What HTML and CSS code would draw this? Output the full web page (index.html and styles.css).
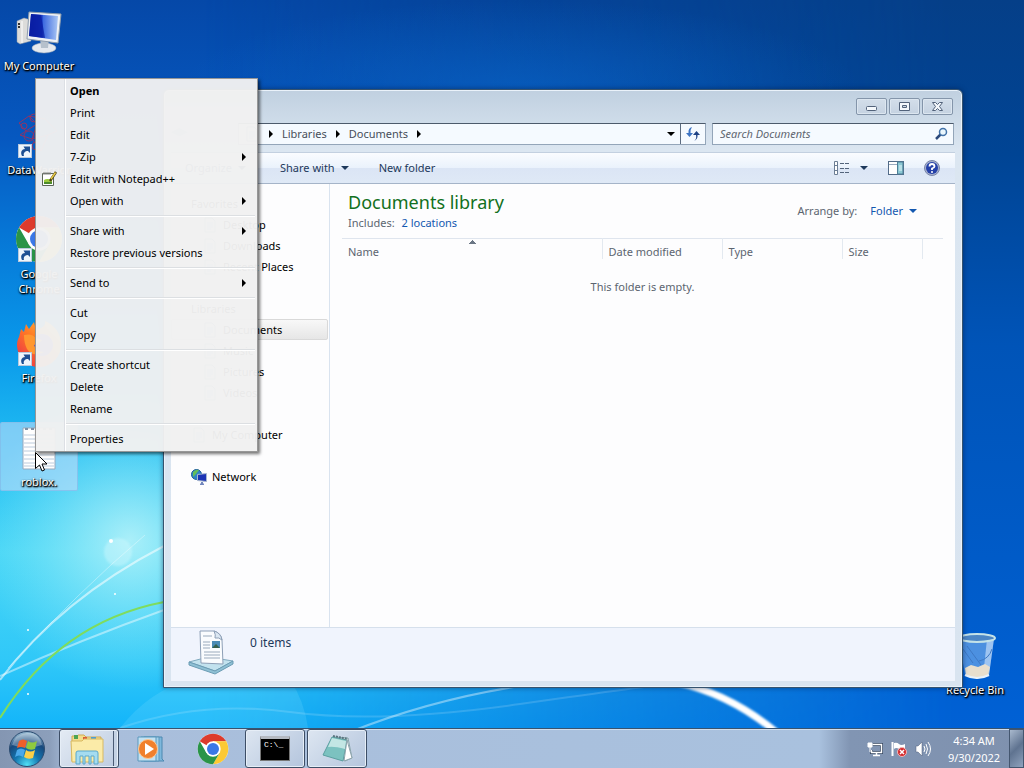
FILE: index.html
```html
<!DOCTYPE html>
<html lang="en">
<head>
    <meta charset="UTF-8">
    <meta name="viewport" content="width=device-width, initial-scale=1.0">
    <title>Desktop</title>
    <link rel="stylesheet" href="styles.css">
</head>
<body>
    <!-- shared symbols -->
    <svg class="defs" width="0" height="0" aria-hidden="true">
        <symbol id="shortcut" viewBox="0 0 14 14">
            <rect x=".5" y=".5" width="13" height="13" fill="#eef5fc" stroke="#b9c9dc"/>
            <path d="M4 12C2 8 4 5 7 5L5.500 2.500H12V9L10 7C7 7 5 9 6 12Z" fill="#1d4f93"/>
        </symbol>
        <symbol id="chrome" viewBox="0 0 48 48">
            <circle cx="24" cy="24" r="23" fill="#fff"/>
            <path d="M24 24L4.100 12.500A23 23 0 0 1 43.900 12.500H24Z" fill="#dd3b2c"/>
            <path d="M43.900 12.500A23 23 0 0 1 24 47L34 29.800 34 17.500 24 12.500Z" fill="#fcc934"/>
            <path d="M24 47A23 23 0 0 1 4.100 12.500L14 29.800 24 35 34 29.800Z" fill="#2a9448"/>
            <circle cx="24" cy="24" r="11.500" fill="#fff"/>
            <circle cx="24" cy="24" r="9" fill="#3b78e7"/>
        </symbol>
        <symbol id="page" viewBox="0 0 16 16">
            <path d="M3 1H10L13 4V15H3Z" fill="#fff" stroke="#7c93ad"/>
            <path d="M5 6H11M5 8H11M5 10H11M5 12H9" stroke="#7ba5cf"/>
        </symbol>
    </svg>

    <div class="desktop">
        <svg class="wallpaper" viewBox="0 0 1024 768" preserveAspectRatio="none" aria-hidden="true">
            <defs>
                <linearGradient id="sky" x1="0" y1="0" x2="0" y2="1">
                    <stop offset="0" stop-color="#0548a8"/>
                    <stop offset=".18" stop-color="#0658c0"/>
                    <stop offset=".3" stop-color="#0675d5"/>
                    <stop offset=".45" stop-color="#0998ea"/>
                    <stop offset=".58" stop-color="#20bcf2"/>
                    <stop offset=".72" stop-color="#48d6f6"/>
                    <stop offset=".86" stop-color="#30c8f8"/>
                    <stop offset=".95" stop-color="#12b4fa"/>
                    <stop offset="1" stop-color="#12b4fa"/>
                </linearGradient>
                <linearGradient id="right-sky" x1="0" y1="0" x2="0" y2="1">
                    <stop offset="0" stop-color="#053f88"/>
                    <stop offset=".2" stop-color="#004494"/>
                    <stop offset=".45" stop-color="#0054b8"/>
                    <stop offset="1" stop-color="#0062d8"/>
                </linearGradient>
                <linearGradient id="fade" x1="0" y1="0" x2="1" y2="0">
                    <stop offset=".2" stop-color="#fff" stop-opacity="0"/>
                    <stop offset=".55" stop-color="#fff" stop-opacity=".5"/>
                    <stop offset=".93" stop-color="#fff"/>
                </linearGradient>
                <mask id="right-mask"><rect width="1024" height="768" fill="url(#fade)"/></mask>
                <radialGradient id="top-glow">
                    <stop offset="0" stop-color="#0b6ad0"/>
                    <stop offset="1" stop-color="#0b6ad0" stop-opacity="0"/>
                </radialGradient>
                <radialGradient id="glow">
                    <stop offset="0" stop-color="#c4f6fa" stop-opacity=".8"/>
                    <stop offset="1" stop-color="#8aecf8" stop-opacity="0"/>
                </radialGradient>
                <filter id="soft"><feGaussianBlur stdDeviation="1"/></filter>
            </defs>
            <rect width="1024" height="768" fill="url(#sky)"/>
            <rect width="1024" height="768" fill="url(#right-sky)" mask="url(#right-mask)"/>
            <ellipse cx="520" cy="90" rx="340" ry="90" fill="url(#top-glow)" opacity=".5"/>
            <ellipse cx="130" cy="540" rx="150" ry="150" fill="url(#glow)"/>
            <circle cx="118" cy="552" r="14" fill="#dffcff" opacity=".35" filter="url(#soft)"/>
            <path d="M120 728Q150 690 190 680H290Q304 700 308 728Z" fill="#8ce6ff" opacity=".18"/>
            <g fill="none" stroke="#fff">
                <path d="M0 680Q60 600 164 546" stroke-width="2" opacity=".55"/>
                <path d="M8 668Q80 590 145 535" opacity=".35"/>
                <path d="M0 676Q80 640 164 610" stroke-width="2" opacity=".45"/>
                <path d="M120 728Q200 700 290 712T520 704T660 686" stroke-width="2" opacity=".15"/>
                <path d="M350 732Q430 700 520 686" stroke-width="2" opacity=".4"/>
                <path d="M676 682Q730 694 776 732" stroke-width="7" filter="url(#soft)"/>
            </g>
            <path d="M0 718Q60 622 164 602" fill="none" stroke="#7fdc5c" stroke-width="2"/>
            <g fill="#fff"><circle cx="111" cy="541" r="2"/><circle cx="115" cy="594" r="1"/><circle cx="28" cy="694" r="1"/><circle cx="28" cy="630" r="1"/></g>
        </svg>

        <div class="icons">
            <a href="#" class="icon">
                <svg width="48" height="48" viewBox="0 0 48 48">
                    <defs><linearGradient id="screen"><stop offset="0" stop-color="#0b23a8"/><stop offset=".45" stop-color="#1a3ec8"/><stop offset=".5" stop-color="#3f6be0"/><stop offset="1" stop-color="#a9c6f4"/></linearGradient></defs>
                    <path d="M2 14L9 11 16 13V34L5 37 2 35Z" fill="#dcdcda" stroke="#8f9aa8" stroke-width=".5"/>
                    <path d="M3 17H5M3 20H5" stroke="#333" stroke-width="2"/>
                    <path d="M7 14V36" stroke="#fff"/>
                    <ellipse cx="29" cy="41" rx="12" ry="5" fill="#e5e9ee" stroke="#9aa5b2" stroke-width=".5"/>
                    <path d="M25 31H34L33 41H26Z" fill="#b6c1cc"/>
                    <path d="M14 5L46 7 43 36 12 32Z" fill="#eef1f5" stroke="#8e9dad"/>
                    <path d="M16 7L43 9 41 33 14 29Z" fill="url(#screen)"/>
                    <path d="M16 7L26 8 30 31 14 29Z" fill="#0719a0" opacity=".7"/>
                </svg>
                <span>My Computer</span>
            </a>
            <a href="#" class="icon">
                <svg width="48" height="48" viewBox="0 0 48 48">
                    <g fill="none" stroke="#8e3566">
                        <path d="M4 12L14 5 22 13 11 20ZM14 5L30 8M22 13L17 28 5 24 11 20M17 28L26 40 33 24ZM30 8L42 20 33 24"/>
                        <circle cx="9" cy="15" r="3"/><circle cx="19" cy="7" r="4"/><circle cx="14" cy="25" r="5"/><circle cx="21" cy="35" r="4"/>
                    </g>
                    <use href="#shortcut" x="3" y="33" width="14" height="14"/>
                </svg>
                <span>DataWarrior</span>
            </a>
            <a href="#" class="icon">
                <svg width="48" height="48" viewBox="0 0 48 48">
                    <use href="#chrome" width="48" height="48"/>
                    <use href="#shortcut" x="3" y="33" width="14" height="14"/>
                </svg>
                <span>Google<br>Chrome</span>
            </a>
            <a href="#" class="icon">
                <svg width="48" height="48" viewBox="0 0 48 48">
                    <defs><linearGradient id="fox" x1="1" y1="0" x2="0" y2="1"><stop offset="0" stop-color="#ffd54a"/><stop offset=".5" stop-color="#ff7a25"/><stop offset="1" stop-color="#e8264f"/></linearGradient></defs>
                    <path d="M4 18L6 10 9 13 11 5 14 10 19 3 21 11C27 9 31 7 30 2 40 6 46 15 46 25A22 22 0 0 1 2 27C2 22 3 20 4 18Z" fill="url(#fox)"/>
                    <circle cx="27" cy="26" r="11" fill="#6848c4"/>
                    <path d="M9 16Q17 14 21 19L27 21Q24 25 19 26 21 33 29 33 18 39 12 30 9 24 9 16Z" fill="#ff9730"/>
                    <use href="#shortcut" x="3" y="33" width="14" height="14"/>
                </svg>
                <span>Firefox</span>
            </a>
            <a href="#" class="icon selected">
                <svg width="48" height="48" viewBox="0 0 48 48">
                    <path d="M8 5H40V46H8Z" fill="#fff" stroke="#98a9bd"/>
                    <path d="M9 12H39M9 16H39M9 20H39M9 24H39M9 28H39M9 32H39M9 36H39M9 40H39M9 43H39" stroke="#bccbdc"/>
                    <path d="M10 6H40" stroke="#7d90a6" stroke-width="2" stroke-dasharray="3 3"/>
                </svg>
                <span>roblox.</span>
            </a>
        </div>

        <a href="#" class="icon bin">
            <svg width="48" height="48" viewBox="0 0 48 48">
                <path d="M8 7H43L38 44Q26 50 14 44Z" fill="#8ab9ee" fill-opacity=".55"/>
                <path d="M36 8H43L38 44 32 46Z" fill="#d5e7fb" opacity=".6"/>
                <path d="M14 37L20 34 27 36 34 33 39 36 37 44Q26 49 15 44Z" fill="#e9dfcd"/>
                <path d="M12 18L22 32M28 30Q38 28 41 18M16 15L30 34" fill="none" stroke="#3e79c5"/>
                <path d="M14 44Q26 50 38 44" fill="none" stroke="#e9f2fb" stroke-width="2"/>
                <ellipse cx="26" cy="7" rx="18" ry="4" fill="#4c86c5" stroke="#c4e2e8" stroke-width="2"/>
            </svg>
            <span>Recycle Bin</span>
        </a>

        <main class="window">
            <header class="titlebar">
                <button aria-label="Minimize"><svg width="13" height="11"><rect x="1.500" y="5.500" width="10" height="4" rx="1" fill="#f4f8fc" stroke="#52627a"/></svg></button>
                <button aria-label="Maximize"><svg width="13" height="11"><path d="M1.500 1.500H11.500V9.500H1.500ZM4.500 4.500V6.500H8.500V4.500Z" fill="#f4f8fc" fill-rule="evenodd" stroke="#52627a"/></svg></button>
                <button aria-label="Close"><svg width="13" height="11"><path d="M1.500 1.500H4.500L6.500 3.500 8.500 1.500H11.500L8.500 5.500 11.500 9.500H8.500L6.500 7.500 4.500 9.500H1.500L4.500 5.500Z" fill="#f4f8fc" stroke="#52627a"/></svg></button>
            </header>

            <div class="navbar">
                <div class="history"><button aria-label="Back">&#9664;</button><button aria-label="Forward">&#9654;</button></div>
                <nav class="address" aria-label="Address">
                    <svg width="16" height="16"><use href="#page"/></svg>
                    <i class="arrow right"></i>
                    <a href="#">Libraries</a>
                    <i class="arrow right"></i>
                    <a href="#">Documents</a>
                    <i class="arrow right"></i>
                    <button class="drop" aria-label="Previous locations"><i class="arrow down"></i></button>
                    <button class="refresh" aria-label="Refresh">
                        <svg width="16" height="16" viewBox="0 0 16 16"><path d="M7 1Q3 2 3.500 7H1L4.500 11 8 7H5.500Q5 4 7 1Z" fill="#3d74c3"/><path d="M9 15Q12 13 11 9H8L11.500 5 15 9H12.500Q13 13 9 15Z" fill="#1f4285"/></svg>
                    </button>
                </nav>
                <div class="search">
                    <input type="text" placeholder="Search Documents" aria-label="Search Documents">
                    <svg width="14" height="14" viewBox="0 0 14 14"><path d="M7 7L2 12" stroke="#2c4a7c" stroke-width="2.500"/><circle cx="9" cy="5" r="3.500" fill="#e9f6fd" stroke="#4272a8" stroke-width="1.500"/></svg>
                </div>
            </div>

            <div class="toolbar">
                <button class="organize">Organize <i class="arrow down"></i></button>
                <button>Share with <i class="arrow down"></i></button>
                <button>New folder</button>
                <button class="views" aria-label="Change your view">
                    <svg width="16" height="14" viewBox="0 0 16 14"><path d="M.500 .500H3.500V13.500H.500ZM.500 4.500H3.500M.500 9.500H3.500" fill="#fff" stroke="#6c7e95"/><path d="M6 2.500H10M11 2.500H15M6 7.500H10M11 7.500H15M6 11.500H10M11 11.500H15" stroke="#53647b"/></svg>
                    <i class="arrow down"></i>
                </button>
                <button aria-label="Show the preview pane">
                    <svg width="16" height="14" viewBox="0 0 16 14"><rect x=".5" y=".5" width="15" height="13" fill="#fff" stroke="#526b88"/><path d="M1 3.500H9" stroke="#9aabc0"/><rect x="9.500" y="1" width="5.500" height="12" fill="#8cc8d4" stroke="#4d7e97"/><path d="M11 5H14M11 7H14M11 9H14" stroke="#e5f7fb"/></svg>
                </button>
                <button aria-label="Get help">
                    <svg width="16" height="16" viewBox="0 0 16 16"><circle cx="8" cy="8" r="7.500" fill="#a9b2cf" stroke="#7683a8"/><circle cx="8" cy="8" r="6" fill="#2440a8"/><path d="M5.500 6.500Q5.500 4 8 4T10.500 6.500Q10.500 7.500 8 8.500V10" fill="none" stroke="#fff" stroke-width="1.800"/><circle cx="8" cy="12" r="1" fill="#fff"/></svg>
                </button>
            </div>

            <div class="content">
                <nav class="sidebar" aria-label="Folders">
                    <a href="#" class="root">Favorites</a>
                    <a href="#"><svg width="16" height="16"><use href="#page"/></svg>Desktop</a>
                    <a href="#"><svg width="16" height="16"><use href="#page"/></svg>Downloads</a>
                    <a href="#"><svg width="16" height="16"><use href="#page"/></svg>Recent Places</a>
                    <hr>
                    <a href="#" class="root">Libraries</a>
                    <a href="#" class="current"><svg width="16" height="16"><use href="#page"/></svg>Documents</a>
                    <a href="#"><svg width="16" height="16"><use href="#page"/></svg>Music</a>
                    <a href="#"><svg width="16" height="16"><use href="#page"/></svg>Pictures</a>
                    <a href="#"><svg width="16" height="16"><use href="#page"/></svg>Videos</a>
                    <hr>
                    <a href="#" class="root"><svg width="16" height="16"><use href="#page"/></svg>My Computer</a>
                    <hr>
                    <a href="#" class="root">
                        <svg width="16" height="16" viewBox="0 0 16 16"><circle cx="5.500" cy="5.500" r="5" fill="#2f83c7" stroke="#1e5c96"/><path d="M2 3Q5 0 8 1L5 5 2 8ZM6 6L9 7 7 10Z" fill="#65bf57"/><path d="M6.500 5.500L15.500 4.500V12.500L6.500 11.500Z" fill="#1c34b4" stroke="#a8b8ce"/><path d="M11 13V15M9 15.500H13" stroke="#7286bd" stroke-width="2"/></svg>
                        Network
                    </a>
                </nav>

                <section class="library">
                    <div class="library-head">
                        <div>
                            <h1>Documents library</h1>
                            <p>Includes: <a href="#">2 locations</a></p>
                        </div>
                        <div class="arrange">Arrange by: <button>Folder <i class="arrow down"></i></button></div>
                    </div>
                    <table class="files">
                        <thead>
                            <tr><th class="name">Name</th><th>Date modified</th><th>Type</th><th class="size">Size</th><td></td></tr>
                        </thead>
                    </table>
                    <p class="empty">This folder is empty.</p>
                </section>
            </div>

            <footer class="details">
                <svg width="46" height="46" viewBox="0 0 46 46">
                    <path d="M1 32L20 27 45 31 27 41Z" fill="#c2e2ee" stroke="#7fa9be"/>
                    <path d="M1 32V35L27 44 45 34V31L27 41Z" fill="#8fc0d4" stroke="#6b9cb4"/>
                    <path d="M12 1L26 1Q33 3 34 10L35 34 13 33Z" fill="#fafcfe" stroke="#8d9fb6"/>
                    <path d="M26 1Q28 5 27 8 31 7 34 10 33 3 26 1Z" fill="#dbe7f2" stroke="#8d9fb6"/>
                    <path d="M15 6H24M15 12H22M15 15H22M15 18H22M16 22H32M16 25H32M16 28H32" stroke="#9aaabc"/>
                    <rect x="24" y="11" width="8" height="7" fill="#4a8bb5"/><path d="M24 18L28 14 32 18Z" fill="#35604c"/>
                </svg>
                <span>0 items</span>
            </footer>
        </main>

        <div class="menu" role="menu">
            <button role="menuitem" class="default">Open</button>
            <button role="menuitem">Print</button>
            <button role="menuitem">Edit</button>
            <button role="menuitem" class="sub">7-Zip<i class="arrow right"></i></button>
            <button role="menuitem" class="with-icon">
                <svg width="16" height="16" viewBox="0 0 16 16"><path d="M1.500 2.500H12.500V14.500H1.500Z" fill="#fff" stroke="#5d6659"/><path d="M3 9Q6 7 11 9V13H3Z" fill="#9ccb3c"/><path d="M3 11H11V13H3Z" fill="#4c8b2b"/><path d="M3 1V4M5 1V4M7 1V4M9 1V4" stroke="#888"/><path d="M15 1L9 10" stroke="#4b4118" stroke-width="2.500"/><path d="M14.500 1.500L10 8" stroke="#e8c945" stroke-width="1.500"/></svg>
                Edit with Notepad++
            </button>
            <button role="menuitem" class="sub">Open with<i class="arrow right"></i></button>
            <hr>
            <button role="menuitem" class="sub">Share with<i class="arrow right"></i></button>
            <button role="menuitem">Restore previous versions</button>
            <hr>
            <button role="menuitem" class="sub">Send to<i class="arrow right"></i></button>
            <hr>
            <button role="menuitem">Cut</button>
            <button role="menuitem">Copy</button>
            <hr>
            <button role="menuitem">Create shortcut</button>
            <button role="menuitem">Delete</button>
            <button role="menuitem">Rename</button>
            <hr>
            <button role="menuitem">Properties</button>
        </div>

        <svg class="cursor" width="13" height="20" viewBox="0 0 13 20" aria-hidden="true"><path d="M.500 .500V16.500L4.500 13 7 19 9.500 18 7 12H12Z" fill="#fff" stroke="#000"/></svg>
    </div>

    <footer class="taskbar">
        <button class="start" aria-label="Start">
            <svg width="38" height="38" viewBox="0 0 38 38">
                <defs>
                    <radialGradient id="orb" cx=".5" cy=".95" r=".9"><stop offset="0" stop-color="#4fe0f5"/><stop offset=".4" stop-color="#1476b0"/><stop offset=".75" stop-color="#17487c"/><stop offset="1" stop-color="#8eb2cc"/></radialGradient>
                </defs>
                <circle cx="19" cy="19" r="17.500" fill="url(#orb)" stroke="#2b4b70"/>
                <path d="M4 15Q7 4 19 3T34 15Q19 20 4 15Z" fill="#fff" opacity=".3"/>
                <path d="M11 11Q15 8 19 11L17 18Q13 16 9 18Z" fill="#f0602a"/>
                <path d="M20 11Q24 14 29 11L27 19Q22 21 18 18Z" fill="#8fca3f"/>
                <path d="M9 20Q13 17 17 20L15 27Q11 24 7 27Z" fill="#4aa8ea"/>
                <path d="M18 20Q22 23 27 20L25 28Q20 30 16 27Z" fill="#fdd048"/>
            </svg>
        </button>
        <div class="tasks">
            <button class="open stacked" aria-label="Windows Explorer">
                <svg width="34" height="32" viewBox="0 0 34 32">
                    <path d="M2 3H7L8 2H14L16 4H31V28H2Z" fill="#f3dc8c" stroke="#cfab55"/>
                    <path d="M4 2H8V6H4Z" fill="#4ca453"/><path d="M13 4H17V8H13Z" fill="#dc5b38"/><path d="M21 4H26V8H21Z" fill="#4e9fd4"/>
                    <path d="M1 8H12L14 6H33V29H2Z" fill="#fbeba8" stroke="#d8b960"/>
                    <path d="M6 31V20Q6 18 8 18H26Q28 18 28 20V31H24V23H21V31H19V23H15V31H13V23H10V31Z" fill="#a5dcf0" stroke="#5ba8cc"/>
                </svg>
            </button>
            <button aria-label="Windows Media Player">
                <svg width="30" height="30" viewBox="0 0 30 30">
                    <path d="M8 3H26V25L28 27H8Z" fill="#7eb8dc" stroke="#4c88b0"/><path d="M5 3H23V27H5Z" fill="#a5d2ea" stroke="#5b98bd"/><path d="M2 3H20V27H2Z" fill="#c3e2f2" stroke="#5b98bd"/>
                    <circle cx="12" cy="15" r="9.500" fill="#f0802c" stroke="#fbc895"/><path d="M9 9V21L18 15Z" fill="#fff"/>
                </svg>
            </button>
            <button aria-label="Google Chrome"><svg width="32" height="32"><use href="#chrome"/></svg></button>
            <button class="open" aria-label="Command Prompt">
                <span class="cmd">C:\_</span>
            </button>
            <button class="open" aria-label="Notepad">
                <svg width="34" height="32" viewBox="0 0 34 32">
                    <path d="M14 4L28 5 32 25 25 28Z" fill="#eef5f6" stroke="#8ba6ad"/>
                    <path d="M12 4L27 7 23 28 3 22Z" fill="#7cc2c0" stroke="#5b9fa0"/>
                    <path d="M12 5L26 8 25 16Q14 13 8 14Z" fill="#c3e6e4"/>
                    <path d="M13 3L28 6" stroke="#5b7580" stroke-width="2" stroke-dasharray="2 1"/>
                    <path d="M27 7L32 25 24 28Z" fill="#fff" stroke="#8da3ac"/>
                </svg>
            </button>
        </div>
        <div class="tray">
            <svg width="16" height="16" viewBox="0 0 16 16"><path d="M5.500 3.500H14.500V11.500H4.500V9" fill="none" stroke="#33445e" stroke-width="3"/><path d="M5.500 3.500H14.500V11.500H4.500V9M6 14.500H13M9.500 12V14" fill="none" stroke="#fff" stroke-width="1.500"/><path d="M1 2H5V6H1ZM3 6V11" fill="#fff" stroke="#fff"/></svg>
            <svg width="16" height="16" viewBox="0 0 16 16"><path d="M1.500 1V15" stroke="#fff" stroke-width="2"/><path d="M3 2Q6 1 8 3T14 3V9Q11 10 8 8T3 8Z" fill="#fff"/><circle cx="11" cy="11" r="4.500" fill="#d32a2d" stroke="#f4b7b7"/><path d="M9 9L13 13M13 9L9 13" stroke="#fff" stroke-width="1.500"/></svg>
            <svg width="16" height="16" viewBox="0 0 16 16"><path d="M1 5H3L7 1V15L3 11H1Z" fill="#fff" stroke="#4c5c78" stroke-width=".5"/><path d="M9 5Q11 8 9 11M11 3Q14 8 11 13M13 1Q18 8 13 15" fill="none" stroke="#fff"/></svg>
            <time class="clock" datetime="2022-09-30T04:34">4:34 AM<br>9/30/2022</time>
            <button class="show-desktop" aria-label="Show desktop"></button>
        </div>
    </footer>
</body>
</html>
```

FILE: styles.css
```css
* {
    box-sizing: border-box;
}
body {
    font-family: "Segoe UI", "Noto Sans", sans-serif;
    font-size: 11px;
    line-height: 16px;
    margin: 0;
    height: 100vh;
    display: flex;
    flex-direction: column;
    overflow: hidden;
    color: #000;
}
button, input {
    font: inherit;
    color: inherit;
    border: none;
    background: none;
    padding: 0;
    margin: 0;
}
a {
    color: inherit;
    text-decoration: none;
}
svg {
    display: block;
    flex: none;
}
h1, p {
    margin: 0;
    font-weight: normal;
}
.defs {
    position: absolute;
}
.arrow {
    border: 4px solid transparent;
    flex: none;
}
.arrow.right {
    border-left-color: currentColor;
    border-right-width: 0;
}
.arrow.down {
    border-top-color: currentColor;
    border-bottom-width: 0;
}

/* desktop */
.desktop {
    flex: 1;
    position: relative;
}
.wallpaper {
    position: absolute;
    left: 0;
    top: 0;
    width: 100%;
    height: 100vh;
}
.icons {
    position: relative;
    width: 78px;
    padding-top: 6px;
    display: flex;
    flex-direction: column;
}
.icon {
    display: flex;
    flex-direction: column;
    align-items: center;
    gap: 3px;
    height: 104px;
    border: 1px solid transparent;
    color: #fff;
    text-align: center;
    text-shadow: 1px 1px 2px #000, 0 1px 2px #000, 1px 1px 1px #000;
    line-height: 15px;
}
.icon.selected {
    height: 69px;
    background: rgba(190, 220, 250, 0.6);
    border-color: rgba(130, 190, 235, 0.8);
    border-radius: 2px;
}
.bin {
    position: absolute;
    right: 10px;
    bottom: -6px;
    width: 78px;
}

/* explorer window */
.window {
    position: absolute;
    left: 163px;
    right: 61px;
    top: 89px;
    bottom: 40px;
    display: flex;
    flex-direction: column;
    padding: 0 7px 6px;
    border: 1px solid #36536e;
    border-radius: 6px 6px 0 0;
    background: linear-gradient(#c0d0e0, #dbe6f1 60px, #d9e4f0);
    box-shadow: inset 0 0 0 1px #eaf2fa, 0 0 5px rgba(0, 20, 60, 0.5);
}
.titlebar {
    display: flex;
    justify-content: flex-end;
    gap: 2px;
    padding: 8px 2px;
}
.titlebar button {
    width: 31px;
    height: 17px;
    display: flex;
    justify-content: center;
    align-items: center;
    border: 1px solid #8495aa;
    border-radius: 2px;
    background: linear-gradient(#d3deea, #c5d2e1);
    box-shadow: inset 0 0 0 1px #dce6f0;
}
.navbar {
    display: flex;
    gap: 6px;
    padding-right: 1px;
    height: 22px;
}
.history {
    width: 61px;
    color: #9db3cb;
}
.address {
    flex: 1;
    display: flex;
    align-items: center;
    gap: 9px;
    padding-left: 5px;
    border: 1px solid #93a5b9;
    border-top-color: #4c5a6b;
    background: #f5faff;
    color: #000;
}
.address a {
    color: #474e59;
}
.drop {
    display: flex;
    margin-left: auto;
    margin-right: -4px;
}
.refresh {
    align-self: stretch;
    padding: 0 4px;
    border-left: 1px solid #5c6c80;
}
.search {
    width: 242px;
    display: flex;
    align-items: center;
    padding: 0 5px 0 7px;
    border: 1px solid #93a5b9;
    border-top-color: #4c5a6b;
    background: #f5faff;
}
.search input {
    flex: 1;
    min-width: 0;
    outline: none;
}
.search input::placeholder {
    color: #5f6670;
    font-style: italic;
}
.toolbar {
    display: flex;
    align-items: center;
    height: 32px;
    margin-top: 7px;
    padding: 0 15px 0 14px;
    gap: 20px;
    border-top: 1px solid #c3d0e0;
    border-bottom: 1px solid #a5b4c8;
    background: linear-gradient(#fafcff, #eaf2fc 50%, #dbe5f5 51%, #dfe9f6);
    color: #1e395b;
}
.toolbar button {
    display: flex;
    align-items: center;
    gap: 6px;
}
.organize {
    width: 75px;
}
.toolbar button:nth-child(3) {
    margin-left: 10px;
}
.toolbar .views {
    margin-left: auto;
    gap: 10px;
}
.content {
    flex: 1;
    display: flex;
    background: #fdfdfe;
}
.sidebar {
    width: 159px;
    padding: 9px 1px 0 0;
    border-right: 1px solid #d9e3ef;
}
.sidebar a {
    display: flex;
    align-items: center;
    gap: 5px;
    height: 21px;
    padding-left: 30px;
    border: 1px solid transparent;
}
.sidebar .root {
    padding-left: 19px;
}
.sidebar .current {
    background: linear-gradient(#f8f8f8, #e6e6e6);
    border-color: #d9d9d9;
    border-radius: 2px;
}
.sidebar hr {
    height: 21px;
    margin: 0;
    border: none;
}
.library {
    flex: 1;
    min-width: 0;
    color: #5c6570;
}
.library-head {
    display: flex;
    justify-content: space-between;
    align-items: center;
    height: 54px;
    padding: 0 38px 0 18px;
}
.library h1 {
    font-size: 18px;
    line-height: 20px;
    padding-bottom: 3px;
    color: #117020;
}
.library a, .arrange button {
    color: #1358b0;
}
.library p a {
    margin-left: 4px;
}
.arrange, .arrange button {
    display: flex;
    align-items: center;
    gap: 6px;
}
.arrange {
    gap: 13px;
}
.files {
    width: calc(100% - 24px);
    margin-left: 12px;
    border-collapse: collapse;
    table-layout: fixed;
    border-top: 1px solid #dfe5ee;
}
.files th {
    width: 120px;
    height: 20px;
    padding: 6px 6px 0;
    line-height: 14px;
    font-weight: normal;
    text-align: left;
    border-right: 1px solid #e3e9f0;
}
.files .name {
    width: 260px;
    background: linear-gradient(135deg, transparent 50%, #6b7785 50%) no-repeat 127px 1px / 4px 4px,
        linear-gradient(225deg, transparent 50%, #6b7785 50%) no-repeat 131px 1px / 4px 4px;
}
.files .size {
    width: 80px;
}
.empty {
    margin-top: 20px;
    text-align: center;
}
.details {
    display: flex;
    gap: 16px;
    height: 54px;
    padding: 2px 17px;
    border-top: 1px solid #d6e0ec;
    background: #f0f4fd;
    font-size: 12px;
    line-height: 26px;
    color: #1e395b;
}

/* context menu */
.menu {
    position: absolute;
    left: 35px;
    top: 78px;
    width: 223px;
    padding: 1px 2px;
    border: 1px solid #979797;
    background: linear-gradient(90deg, transparent 28px, #dcdfe4 28px, #dcdfe4 29px, #fff 29px, #fff 30px, transparent 30px), rgba(241, 241, 241, 0.97);
    box-shadow: 2px 2px 3px rgba(0, 0, 0, 0.55);
}
.menu button {
    display: flex;
    align-items: center;
    width: 100%;
    height: 22px;
    padding: 0 9px 0 32px;
    text-align: left;
}
.menu .default {
    font-weight: bold;
}
.menu .sub {
    justify-content: space-between;
}
.menu .with-icon {
    gap: 13px;
    padding-left: 3px;
}
.menu hr {
    height: 2px;
    margin: 3px 0 3px 28px;
    border: none;
    border-top: 1px solid #dcdfe2;
    border-bottom: 1px solid #fff;
}
.cursor {
    position: absolute;
    left: 35px;
    top: 452px;
}

/* taskbar */
.taskbar {
    position: relative;
    display: flex;
    height: 40px;
    border-top: 1px solid #38536f;
    box-shadow: inset 0 1px 0 #d0deee;
    background: linear-gradient(90deg, #8496b2 0, #8c9fbb 50px, #a9bedb 70px, #a9c1de 80%, #8195b3 83%, #7f91ae);
}
.start {
    padding: 0 8px;
    width: 59px;
}
.tasks {
    flex: 1;
    display: flex;
    gap: 2px;
}
.tasks button {
    width: 60px;
    display: flex;
    justify-content: center;
    align-items: center;
}
.tasks .open {
    border: 1px solid #3d4e66;
    border-radius: 3px;
    background: linear-gradient(135deg, #dde6f1, #b4c5dd);
    box-shadow: inset 0 0 0 1px #e6eef7;
}
.tasks .stacked {
    padding-right: 5px;
    background: linear-gradient(90deg, transparent 53px, #4a5b74 53px, #4a5b74 54px, #c4d2e4 54px), linear-gradient(135deg, #e4ebf4, #bccbe0);
}
.cmd {
    width: 30px;
    height: 25px;
    padding-left: 3px;
    border: 1px solid #777;
    border-top: 3px solid #b5bac2;
    background: #000;
    color: #fff;
    font: 8px/11px "Liberation Mono", monospace;
    text-align: left;
}
.tray {
    display: flex;
    align-items: center;
    gap: 8px;
    color: #fff;
}
.clock {
    width: 70px;
    line-height: 17px;
    text-align: center;
}
.show-desktop {
    align-self: stretch;
    width: 15px;
    margin-left: -8px;
    border: 1px solid #44566f;
    background: linear-gradient(135deg, #a9b9ce, #5f7390 50%, #8fa2bd);
}
```
